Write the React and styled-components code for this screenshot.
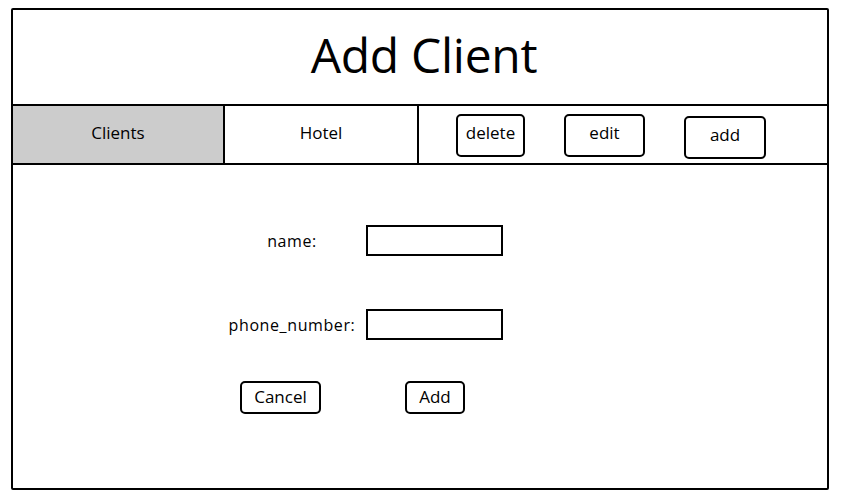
import React from 'react';
import styled, { createGlobalStyle } from 'styled-components';

const GlobalStyle = createGlobalStyle`
  html, body {
    margin: 0;
    padding: 0;
    background: #ffffff;
    font-family: 'Open Sans', 'DejaVu Sans', sans-serif;
    color: #000;
  }
`;

const App = () => {
  return (
    <>
      <GlobalStyle />
      <Frame>
        <Header>
          <Title>Add Client</Title>
        </Header>
        <NavBar>
          <Tab active>Clients</Tab>
          <Tab width={194}>Hotel</Tab>
          <Actions>
            <NavButton width={69} top={0}>delete</NavButton>
            <NavButton width={81} top={0}>edit</NavButton>
            <NavButton width={82} top={2}>add</NavButton>
          </Actions>
        </NavBar>
        <Body>
          <FormGrid>
            <Label>name:</Label>
            <Input />
            <Label>phone_number:</Label>
            <Input />
          </FormGrid>
          <ButtonRow>
            <FormButton width={81}>Cancel</FormButton>
            <FormButton width={60}>Add</FormButton>
          </ButtonRow>
        </Body>
      </Frame>
    </>
  );
};

export default App;

const Frame = styled.div`
  box-sizing: border-box;
  margin: 8px 0 0 11px;
  width: 818px;
  height: 482px;
  border: 2px solid #000;
  border-radius: 2px;
  display: flex;
  flex-direction: column;
`;

const Header = styled.div`
  height: 94px;
  display: flex;
  align-items: center;
  justify-content: center;
  border-bottom: 2px solid #000;
`;

const Title = styled.h1`
  margin: 0;
  font-size: 48px;
  font-weight: 400;
  letter-spacing: -0.3px;
  transform: translate(4px, -3px);
`;

const NavBar = styled.div`
  height: 57px;
  display: flex;
  align-items: stretch;
  border-bottom: 2px solid #000;
`;

const Tab = styled.div`
  box-sizing: border-box;
  width: ${p => (p.width ? p.width : 212)}px;
  display: flex;
  align-items: center;
  justify-content: center;
  padding-bottom: 4px;
  font-size: 17px;
  background: ${p => (p.active ? '#cccccc' : '#ffffff')};
  border-right: 2px solid #000;
`;

const Actions = styled.div`
  flex: 1;
  display: flex;
  align-items: flex-start;
  gap: 39px;
  padding: 8px 0 0 37px;
`;

const NavButton = styled.div`
  box-sizing: border-box;
  width: ${p => p.width}px;
  height: 43px;
  margin-top: ${p => p.top}px;
  border: 2px solid #000;
  border-radius: 5px;
  display: flex;
  align-items: center;
  justify-content: center;
  padding-bottom: 7px;
  font-size: 17px;
`;

const Body = styled.div`
  flex: 1;
  padding: 60px 0 0 214px;
  display: flex;
  flex-direction: column;
`;

const FormGrid = styled.div`
  display: grid;
  grid-template-columns: 130px 137px;
  column-gap: 9px;
  row-gap: 53px;
  align-items: center;
`;

const Label = styled.div`
  text-align: center;
  font-size: 16px;
  letter-spacing: 0.6px;
  white-space: nowrap;
`;

const Input = styled.div`
  box-sizing: border-box;
  height: 31px;
  border: 2px solid #000;
`;

const ButtonRow = styled.div`
  display: flex;
  gap: 84px;
  margin: 41px 0 0 13px;
`;

const FormButton = styled.div`
  box-sizing: border-box;
  width: ${p => p.width}px;
  height: 33px;
  border: 2px solid #000;
  border-radius: 5px;
  display: flex;
  align-items: center;
  justify-content: center;
  padding-bottom: 3px;
  font-size: 17px;
`;
